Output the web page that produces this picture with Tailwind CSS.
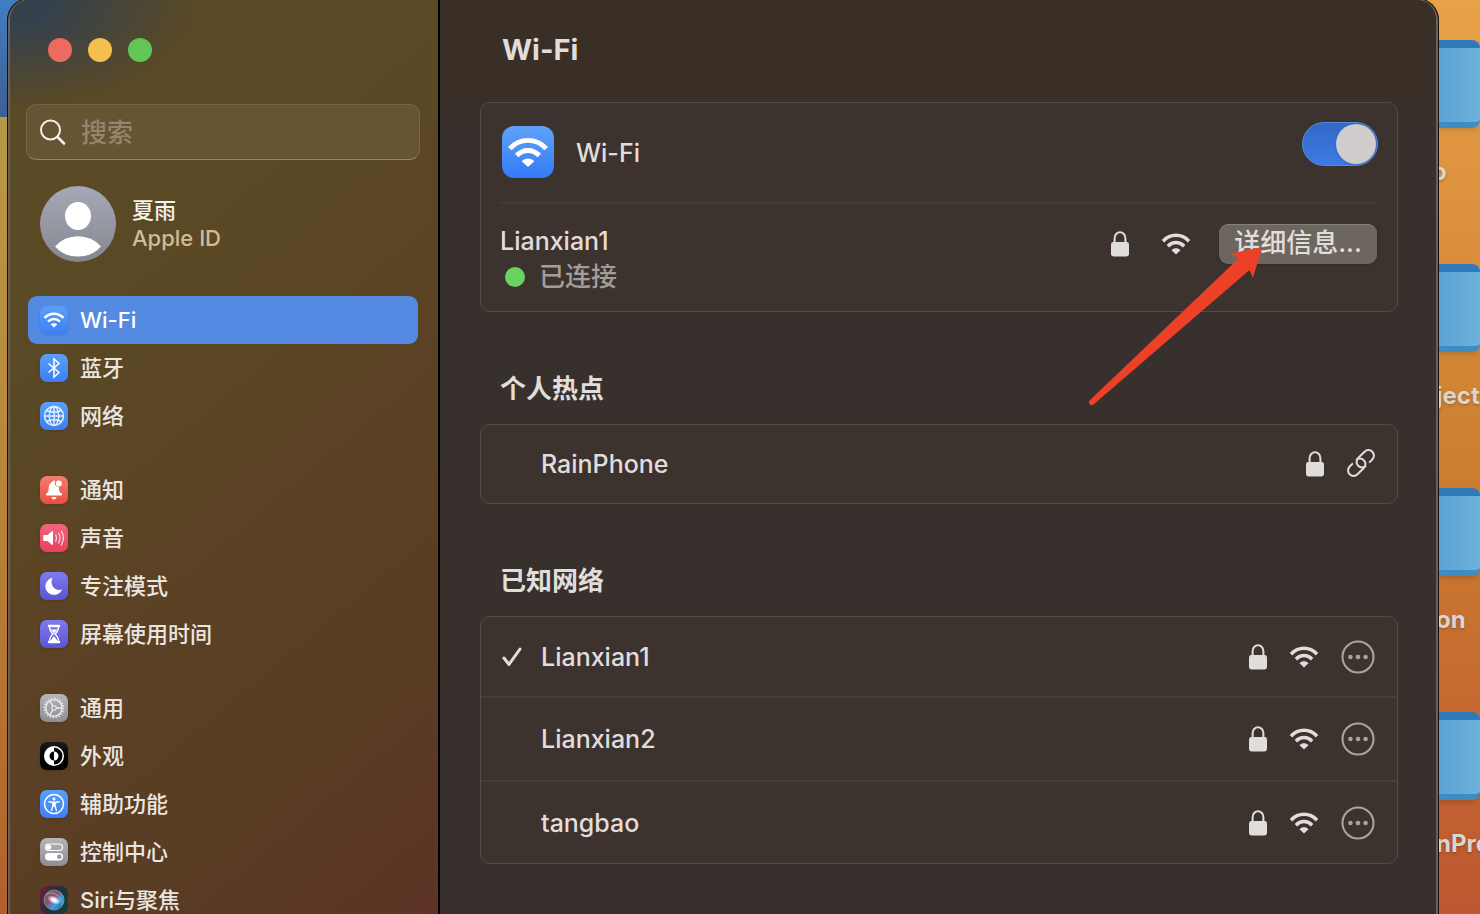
<!DOCTYPE html>
<html lang="zh-CN">
<head>
  <meta charset="UTF-8" />
  <meta name="viewport" content="width=device-width, initial-scale=1.0" />
  <title>Wi-Fi</title>
  <script src="https://cdn.jsdelivr.net/npm/@tailwindcss/browser@4"></script>
</head>
<body class="relative h-screen overflow-hidden bg-linear-to-b from-[#e9a148] via-[#cd7f31] to-[#bd5730] font-['Inter','Noto_Sans_CJK_SC',sans-serif]">

  <!-- Shared icons -->
  <svg class="hidden">
    <symbol id="wifi" viewBox="0 0 30 22">
      <path d="M2 8.2C9.4 .4 20.6 .4 28 8.2M6.9 13.2C11.6 8.4 18.4 8.4 23.1 13.2" fill="none" stroke="currentColor" stroke-width="3.5" />
      <path d="M15 21.4l-4.500-4.200c2.400-2.500 6.600-2.500 9 0z" fill="currentColor" />
    </symbol>
    <symbol id="lock" viewBox="0 0 18 26">
      <path d="M3.600 12V7.200a5.400 5.900 0 0 1 10.800 0V12" fill="none" stroke="currentColor" stroke-width="2" />
      <rect x="0" y="11" width="18" height="14.500" rx="2.400" fill="currentColor" />
    </symbol>
    <symbol id="more" viewBox="0 0 34 34">
      <circle cx="17" cy="17" r="15.500" fill="none" stroke="currentColor" stroke-width="2.100" />
      <circle cx="9.400" cy="17" r="2.300" fill="currentColor" />
      <circle cx="17" cy="17" r="2.300" fill="currentColor" />
      <circle cx="24.600" cy="17" r="2.300" fill="currentColor" />
    </symbol>
  </svg>

  <!-- Desktop behind the window -->
  <div class="absolute inset-y-0 left-0 w-10 bg-linear-to-b from-[#b79d4e] via-[#b9873a] to-[#b1602c]"></div>
  <div class="absolute top-0 left-0 h-[117px] w-10 bg-linear-to-b from-[#3f7fc4] to-[#3d5f90]"></div>
  <div class="absolute inset-y-0 right-0 w-11 pt-10 text-2xl font-bold text-[#d9d5d1]">
    <div class="h-56">
      <div class="h-22 rounded-r-lg border-t-8 border-b-6 border-t-[#3079b8] border-b-[#3f8cc4] bg-linear-to-r from-[#59a2d1] to-[#6cb2dc] shadow-md"></div>
      <p class="mt-7 -ml-1 text-shadow-md">o</p>
    </div>
    <div class="h-56">
      <div class="h-22 rounded-r-lg border-t-8 border-b-6 border-t-[#3079b8] border-b-[#3f8cc4] bg-linear-to-r from-[#59a2d1] to-[#6cb2dc] shadow-md"></div>
      <p class="mt-7 text-shadow-md">ject</p>
    </div>
    <div class="h-56">
      <div class="h-22 rounded-r-lg border-t-8 border-b-6 border-t-[#3079b8] border-b-[#3f8cc4] bg-linear-to-r from-[#59a2d1] to-[#6cb2dc] shadow-md"></div>
      <p class="mt-7 text-shadow-md">on</p>
    </div>
    <div class="h-56">
      <div class="h-22 rounded-r-lg border-t-8 border-b-6 border-t-[#3079b8] border-b-[#3f8cc4] bg-linear-to-r from-[#59a2d1] to-[#6cb2dc] shadow-md"></div>
      <p class="mt-7 text-shadow-md">nPro</p>
    </div>
  </div>

  <!-- Settings window -->
  <div class="relative -mt-0.5 mr-[41px] ml-[7px] h-[calc(100vh+2px)] overflow-hidden rounded-t-[22px] border-x border-t border-[#15110f] bg-[#38302c]">
    <div class="flex h-full overflow-hidden rounded-t-[21px] border-x-2 border-t border-[#6a6159]">

      <!-- Sidebar -->
      <aside class="w-[430px] shrink-0 border-r-2 border-black bg-[radial-gradient(ellipse_190px_110px_at_0_0,#34414d_20%,transparent),linear-gradient(140deg,#5a4a25_0%,#5a4925_30%,#5b4224_55%,#593c24_80%,#5d3325_100%)] pt-[38px] pr-[18px] pl-4">
        <div class="ml-[22px] flex gap-4">
          <button aria-label="关闭" class="size-6 rounded-full bg-[#ed6a5f]"></button>
          <button aria-label="最小化" class="size-6 rounded-full bg-[#f5bf4f]"></button>
          <button aria-label="缩放" class="size-6 rounded-full bg-[#61c655]"></button>
        </div>

        <label class="mt-[42px] flex h-14 items-center gap-3.5 rounded-[10px] border border-[#776645] border-b-[#978662] bg-[#665432] px-3">
          <svg class="size-7 text-[#f3efe9]" viewBox="0 0 28 28" fill="none" stroke="currentColor" stroke-linecap="round">
            <circle cx="11.500" cy="12" r="9.500" stroke-width="2" />
            <path d="M18.500 19l6.500 6.500" stroke-width="2.600" />
          </svg>
          <input type="search" aria-label="搜索" placeholder="搜索" class="min-w-0 flex-1 bg-transparent text-[26px] font-medium text-[#f3efe9] outline-none placeholder:text-[#94866a]" />
        </label>

        <a href="#" class="mt-[26px] ml-3.5 flex items-center gap-4">
          <svg class="size-[76px]" viewBox="0 0 76 76">
            <defs>
              <linearGradient id="avatar" x2="0" y2="1"><stop stop-color="#a6a8b6" /><stop offset="1" stop-color="#85878f" /></linearGradient>
            </defs>
            <circle cx="38" cy="38" r="38" fill="url(#avatar)" />
            <ellipse cx="38" cy="30" rx="13" ry="14" fill="#fff" />
            <path d="M15 60.500Q24 50.300 38 50.300T61 60.500Q52 70.600 38 70.600T15 60.500z" fill="#fff" />
          </svg>
          <span class="flex flex-col text-[22px] leading-7 font-medium">
            <span class="text-[#f5f1ec]">夏雨</span>
            <span class="text-[#d3bb96]">Apple ID</span>
          </span>
        </a>

        <nav class="mt-[34px] mr-0.5 ml-0.5 flex flex-col gap-[26px] text-[22px] font-medium text-[#ebe5e0]">
          <div>
            <a href="#" aria-current="page" class="flex h-12 items-center gap-3 rounded-[9px] bg-[#558ae2] px-3 text-white">
              <span class="flex size-7 items-center justify-center rounded-[7px] bg-linear-to-b from-[#5b9ffa] to-[#3b7ff6] shadow"><svg class="h-4 w-[22px]"><use href="#wifi" /></svg></span>
              Wi-Fi
            </a>
            <a href="#" class="flex h-12 items-center gap-3 px-3">
              <svg class="size-7 rounded-[7px] bg-linear-to-b from-[#5b9ffa] to-[#3b7ff6] shadow" viewBox="0 0 28 28">
                <path d="M8.500 9.500L19 18.500L14 23V5L19 9.500L8.500 18.500" fill="none" stroke="#fff" stroke-width="1.500" />
              </svg>
              蓝牙
            </a>
            <a href="#" class="flex h-12 items-center gap-3 px-3">
              <svg class="size-7 rounded-[7px] bg-linear-to-b from-[#5b9ffa] to-[#3b7ff6] shadow" viewBox="0 0 28 28" fill="none" stroke="#e6f0ff" stroke-width="1.400">
                <circle cx="14" cy="14" r="9.500" />
                <ellipse cx="14" cy="14" rx="4.700" ry="9.500" />
                <path d="M14 4.500v19M4.500 14h19M6.500 8.500q7.500 3.500 15 0M6.500 19.500q7.500-3.500 15 0" />
              </svg>
              网络
            </a>
          </div>

          <div>
            <a href="#" class="flex h-12 items-center gap-3 px-3">
              <svg class="size-7 rounded-[7px] bg-linear-to-b from-[#f27d70] to-[#eb4d42] shadow" viewBox="0 0 28 28" fill="#fff">
                <path d="M13 5.200c.6-.8 1.600-.8 2.200 0-1.400 2.500.2 5.700 3.600 5.600.2 4 .5 5 3 7 .8 1-.1 1.700-.8 1.700H7c-1 0-1.500-.9-.7-1.700C9.600 15 8 13.500 9 10c.6-2.400 2-3.600 4-4.800zM11.500 21h5c-.3 3.200-4.700 3.200-5 0z" />
                <circle cx="18.800" cy="7.400" r="3" />
              </svg>
              通知
            </a>
            <a href="#" class="flex h-12 items-center gap-3 px-3">
              <svg class="size-7 rounded-[7px] bg-linear-to-b from-[#ee6580] to-[#eb3f5e] shadow" viewBox="0 0 28 28">
                <path d="M4 11h3.500l4.500-3.700q1-.6 1 .5v12.400q0 1.100-1 .5L7.500 17H4q-.8 0-.8-.8v-4.400q0-.8.8-.8z" fill="#fff" />
                <path d="M15.800 11q1.600 3 0 6M18.500 9q3 5 0 10M21.300 7.200q4.300 6.800 0 13.600" fill="none" stroke="#ffd3da" stroke-width="1.300" stroke-linecap="round" />
              </svg>
              声音
            </a>
            <a href="#" class="flex h-12 items-center gap-3 px-3">
              <svg class="size-7 rounded-[7px] bg-linear-to-b from-[#7f7bee] to-[#5a54d6] shadow" viewBox="0 0 28 28">
                <path d="M12.500 5.800A8.600 8.600 0 1 0 22 17.400C15 19.800 9.200 13 12.500 5.800z" fill="#fff" />
              </svg>
              专注模式
            </a>
            <a href="#" class="flex h-12 items-center gap-3 px-3">
              <svg class="size-7 rounded-[7px] bg-linear-to-b from-[#7f7bee] to-[#5a54d6] shadow" viewBox="0 0 28 28">
                <path d="M9 6h10M9 22h10" stroke="#fff" stroke-width="2.400" stroke-linecap="round" />
                <path d="M9.500 6c0 4.500 1 6 3.500 8-2.500 2-3.500 3.500-3.500 8h9c0-4.500-1-6-3.500-8 2.500-2 3.500-3.500 3.500-8" fill="none" stroke="#fff" stroke-width="1.400" />
                <path d="M10.800 9.500h6.400L14 13.500zM14 16l3.600 5h-7.200z" fill="#fff" />
              </svg>
              屏幕使用时间
            </a>
          </div>

          <div>
            <a href="#" class="flex h-12 items-center gap-3 px-3">
              <svg class="size-7 rounded-[7px] bg-linear-to-b from-[#b5b5ba] to-[#8e8d93] shadow" viewBox="0 0 28 28" fill="none" stroke="#eee">
                <circle cx="14" cy="14" r="9.600" stroke-width="1.500" stroke-dasharray="1.500 1.500" />
                <circle cx="14" cy="14" r="8.200" stroke-width="1.300" />
                <circle cx="14" cy="14" r="2.200" stroke-width="1.100" />
                <path d="M16.200 14H22M12.900 12.100L10 7M12.900 15.900L10 21" stroke-width="1.300" />
              </svg>
              通用
            </a>
            <a href="#" class="flex h-12 items-center gap-3 px-3">
              <svg class="size-7 rounded-[7px] bg-linear-to-b from-[#1c1c1c] to-black shadow" viewBox="0 0 28 28">
                <circle cx="14" cy="14" r="9.300" fill="none" stroke="#fff" stroke-width="1.500" />
                <path d="M14 4.700a9.300 9.300 0 0 0 0 18.600v-4.800a4.500 4.500 0 0 1 0-9z" fill="#fff" />
                <path d="M14 9.500a4.500 4.500 0 0 1 0 9z" fill="#fff" />
              </svg>
              外观
            </a>
            <a href="#" class="flex h-12 items-center gap-3 px-3">
              <svg class="size-7 rounded-[7px] bg-linear-to-b from-[#5b9ffa] to-[#3b7ff6] shadow" viewBox="0 0 28 28">
                <circle cx="14" cy="14" r="9.500" fill="none" stroke="#fff" stroke-width="1.500" />
                <circle cx="14" cy="8.900" r="1.500" fill="#fff" />
                <path d="M9 11.700l3.600.8h2.800l3.600-.8M14 12v4M12.900 12.500v3.500l-1.400 4.500M15.100 12.500v3.500l1.400 4.500" fill="none" stroke="#fff" stroke-width="1.400" stroke-linecap="round" />
              </svg>
              辅助功能
            </a>
            <a href="#" class="flex h-12 items-center gap-3 px-3">
              <svg class="size-7 rounded-[7px] bg-linear-to-b from-[#b5b5ba] to-[#8e8d93] shadow" viewBox="0 0 28 28">
                <rect x="5.500" y="6" width="17" height="6.500" rx="3.250" fill="none" stroke="#fff" stroke-width="1.200" />
                <circle cx="8.800" cy="9.250" r="2.500" fill="#fff" />
                <rect x="5" y="15" width="18" height="7.500" rx="3.750" fill="#fff" />
                <circle cx="19.300" cy="18.750" r="2.300" fill="#98979d" />
              </svg>
              控制中心
            </a>
            <a href="#" class="flex h-12 items-center gap-3 px-3">
              <svg class="size-7 rounded-[7px]" viewBox="0 0 28 28">
                <defs>
                  <linearGradient id="siri-bg" y2=".5"><stop stop-color="#7d1840" /><stop offset=".5" stop-color="#2c2b3c" /><stop offset="1" stop-color="#123f36" /></linearGradient>
                  <linearGradient id="siri-orb" y2="1"><stop stop-color="#3d7a5c" /><stop offset=".4" stop-color="#a0486e" /><stop offset=".65" stop-color="#3e9fe0" /><stop offset="1" stop-color="#2348a8" /></linearGradient>
                  <radialGradient id="siri-glow"><stop offset=".3" stop-color="#fff" /><stop offset="1" stop-color="#fff" stop-opacity="0" /></radialGradient>
                </defs>
                <rect width="28" height="28" fill="url(#siri-bg)" />
                <circle cx="14" cy="14" r="10" fill="url(#siri-orb)" stroke="#7aa69c" stroke-width=".8" />
                <path d="M6 9q6-5 12 1t4 9" fill="none" stroke="#8ed0b4" stroke-width=".7" />
                <ellipse cx="14" cy="14" rx="7" ry="4" fill="url(#siri-glow)" transform="rotate(25 14 14)" />
              </svg>
              Siri与聚焦
            </a>
          </div>
        </nav>
      </aside>

      <!-- Wi-Fi pane -->
      <main class="min-w-0 flex-1 bg-linear-to-b from-[#392f27] from-10% to-[#38302c] to-14% pr-[38px] pl-10 text-[25px] font-medium text-[#e1dddb]">
        <header class="flex h-[102px] items-center pb-0.5 pl-[22px]">
          <h1 class="text-[29px] font-bold">Wi-Fi</h1>
        </header>

        <section class="rounded-[10px] border border-[#554c48] bg-[#3c332f] px-[19px]">
          <div class="flex h-[101px] items-start border-b-2 border-[#443b37]">
            <label for="wifi-toggle" class="mt-[23px] ml-0.5 flex items-center gap-[22px]">
              <span class="flex size-[52px] items-center justify-center rounded-xl bg-linear-to-b from-[#5ea2fa] to-[#337af6] text-white"><svg class="h-[31px] w-[42px]"><use href="#wifi" /></svg></span>
              <span class="pt-1">Wi-Fi</span>
            </label>
            <input id="wifi-toggle" type="checkbox" role="switch" checked class="mt-[19px] ml-auto h-11 w-[76px] appearance-none rounded-full border border-[#5688df] bg-linear-to-b from-[#3269c4] to-[#3d7ae4] p-px before:block before:size-10 before:rounded-full before:bg-[#cfcccb] before:shadow checked:before:ml-8" />
          </div>
          <div class="flex h-[107px] items-start pt-5 pr-px">
            <div>
              <p class="leading-[34px]">Lianxian1</p>
              <p class="flex items-center gap-3.5 pl-[5px] text-[26px] leading-[38px] text-[#a39d9a]"><span class="size-5 rounded-full bg-[#68d35e]"></span>已连接</p>
            </div>
            <div class="relative ml-auto flex h-10 items-center">
              <svg class="h-[26px] w-[18px]"><use href="#lock" /></svg>
              <svg class="ml-8 h-[22px] w-[30px]"><use href="#wifi" /></svg>
              <button class="ml-7 flex h-10 w-[158px] items-center justify-center rounded-[9px] border-t border-[#86807a] bg-[#6c665f] pb-1 text-[26px] shadow">详细信息...</button>
              <svg class="pointer-events-none absolute top-5 right-28 h-[164px] w-[184px]" viewBox="0 0 184 164">
                <path d="M181 3L172 34L168.500 26L12.500 160.500Q10 162 8.500 160Q7 158 9 156L157.500 14.500L150 9.500Z" fill="#ec4127" />
              </svg>
            </div>
          </div>
        </section>

        <h2 class="mt-[59px] ml-5 text-[26px] leading-9 font-bold">个人热点</h2>
        <section class="mt-[17px] flex h-20 items-center rounded-[10px] border border-[#554c48] bg-[#3c332f] pr-[21px] pl-[60px]">
          <p class="pt-0.5">RainPhone</p>
          <svg class="ml-auto h-[26px] w-[18px]"><use href="#lock" /></svg>
          <svg class="ml-[22px] size-[30px]" viewBox="0 0 30 30" fill="none" stroke="currentColor" stroke-width="2">
            <g transform="rotate(-45 15 14)">
              <path d="M9 8.500H4.500a5.500 5.500 0 0 0 0 11H13.500a5.500 5.500 0 0 0 0-11" />
              <path d="M21 19.500H25.500a5.500 5.500 0 0 0 0-11H16.500a5.500 5.500 0 0 0 0 11" />
            </g>
          </svg>
        </section>

        <h2 class="mt-[59px] ml-5 text-[26px] leading-9 font-bold">已知网络</h2>
        <ul class="mt-[17px] divide-y-2 divide-[#463d39] rounded-[10px] border border-[#554c48] bg-[#3c332f]">
          <li class="flex h-[81px] items-center pr-[22px] pl-5">
            <svg class="mr-[18px] h-[22px] w-[22px]" viewBox="0 0 22 22" fill="none" stroke="currentColor" stroke-width="3" stroke-linecap="round" stroke-linejoin="round"><path d="M3 12l5 6.500L19 3" /></svg>
            <p class="pt-0.5">Lianxian1</p>
            <svg class="ml-auto h-[26px] w-[18px]"><use href="#lock" /></svg>
            <svg class="mx-[22px] h-[22px] w-[30px]"><use href="#wifi" /></svg>
            <button aria-label="更多" class="text-[#aaa4a1]"><svg class="size-[34px]"><use href="#more" /></svg></button>
          </li>
          <li class="flex h-[84px] items-center pr-[22px] pl-[60px]">
            <p class="pt-0.5">Lianxian2</p>
            <svg class="ml-auto h-[26px] w-[18px]"><use href="#lock" /></svg>
            <svg class="mx-[22px] h-[22px] w-[30px]"><use href="#wifi" /></svg>
            <button aria-label="更多" class="text-[#aaa4a1]"><svg class="size-[34px]"><use href="#more" /></svg></button>
          </li>
          <li class="flex h-[81px] items-center pr-[22px] pl-[60px]">
            <p class="pt-0.5">tangbao</p>
            <svg class="ml-auto h-[26px] w-[18px]"><use href="#lock" /></svg>
            <svg class="mx-[22px] h-[22px] w-[30px]"><use href="#wifi" /></svg>
            <button aria-label="更多" class="text-[#aaa4a1]"><svg class="size-[34px]"><use href="#more" /></svg></button>
          </li>
        </ul>
      </main>
    </div>
  </div>

</body>
</html>
